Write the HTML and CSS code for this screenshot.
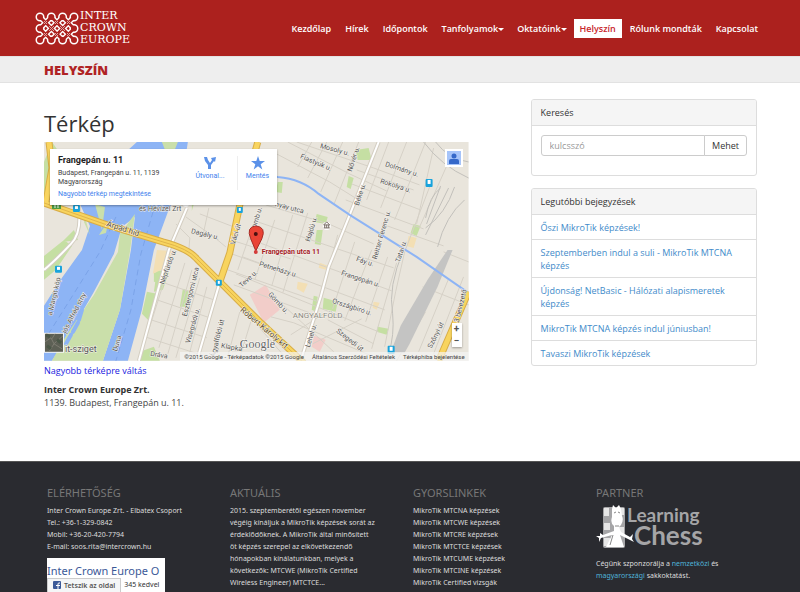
FILE: index.html
```html
<!DOCTYPE html>
<html lang="hu">
<head>
<meta charset="utf-8">
<title>Helyszín - Inter Crown Europe</title>
<link rel="stylesheet" href="styles.css">
</head>
<body>
<header class="topbar">
  <a class="brand" href="#" aria-label="Inter Crown Europe">
    <svg class="brand-mark" viewBox="0 0 44 33" width="44" height="33" aria-hidden="true">
      <defs>
        <path id="lattice" d="M5 5 L28 28 M16.300 5 L39 28 M27.600 5 L39 16.500 M5 16.500 L16.300 28 M16.300 5 L5 16.500 M27.600 5 L5 28 M39 5 L16.300 28 M39 16.500 L27.600 28"/>
        <path id="nodes" d="M5 5 h0 M16.300 5 h0 M27.600 5 h0 M39 5 h0 M5 16.500 h0 M39 16.500 h0 M5 28 h0 M16.300 28 h0 M27.600 28 h0 M39 28 h0" stroke-linecap="round"/>
      </defs>
      <g fill="none" stroke="#fff"><use href="#lattice" stroke-width="5.500"/><use href="#nodes" stroke-width="9"/></g>
      <g fill="none" stroke="#ac211e"><use href="#lattice" stroke-width="2.800"/><use href="#nodes" stroke-width="6"/></g>
      <path d="M14 14 L19 19 M19 14 L14 19 M25 14 L30 19 M30 14 L25 19 M9 9 L12 12 M12 9 L9 12 M20 9 L23 12 M23 9 L20 12 M32 9 L35 12 M35 9 L32 12 M9 21 L12 24 M12 21 L9 24 M20 21 L23 24 M23 21 L20 24 M32 21 L35 24 M35 21 L32 24" stroke="#fff" stroke-width="1" opacity=".6"/>
    </svg>
    <span class="brand-name">INTER<br>CROWN<br>EUROPE</span>
  </a>
  <nav class="menu">
    <a href="#">Kezdőlap</a>
    <a href="#">Hírek</a>
    <a href="#">Időpontok</a>
    <a href="#">Tanfolyamok<i class="caret"></i></a>
    <a href="#">Oktatóink<i class="caret"></i></a>
    <a class="active" href="#">Helyszín</a>
    <a href="#">Rólunk mondták</a>
    <a href="#">Kapcsolat</a>
  </nav>
</header>
<div class="titlebar"><strong>HELYSZÍN</strong></div>

<main class="page">
  <article>
    <h1>Térkép</h1>
    <div class="map">
      <svg class="map-art" viewBox="0 0 425 219" preserveAspectRatio="xMidYMid slice" role="img" aria-label="Térkép: Frangepán u. 11">
        <rect width="425" height="219" fill="#e9e5dc"/>
        <!-- river and island -->
        <path d="M93 0 H144 L138 40 L124 70 L110 108 L98 168 L84 219 H59 L76 168 L87 108 L91 75 L78 85 L70 112 L50 150 L28 188 L8 219 H0 V164 L18 136 L38 108 L46 84 L36 62 L60 30 Z" fill="#8db4f5"/>
        <path d="M91 72 L76 92 L74 110 L50 153 L22 194 L8 219 H59 L76 168 L86 110 Z" fill="#cadfaa"/>
        <path d="M118 0 H134 L126 20 Z M51 62 L58 88 L61 65 Z M41 75 L46 93 L40 80 Z M55 93 L65 78 L62 91 Z" fill="#cadfaa"/>
        <path d="M38 168 L35 178 M34 181 L29 190 M27 193 L22 202" stroke="#8db4f5" stroke-width="4" stroke-linecap="round"/>
        <g stroke="#7aa3e8" stroke-width="1" stroke-dasharray="6 4" fill="none"><path d="M112 60 L97 112 L87 168 L72 219 M72 75 L56 110 L26 158 L2 196"/></g>
        <!-- parks and districts -->
        <path d="M0 20 L8 0 L15 10 L5 60 H0 Z M0 114 L20 98 L28 104 L12 128 L0 138 Z M18 100 L30 88 L34 98 Z M110 150 L113 128 L125 131 L119 148 Z M98 172 L103 150 L113 152 L106 180 Z M136 165 L139 147 L145 149 L143 165 Z M110 131 L117 129 L116 141 L110 140 Z M312 8 L325 6 L328 18 L314 18 Z M305 34 L310 36 L307 47 L303 45 Z M234 40 L239 40 L238 51 L232 50 Z M273 72 L284 75 L282 82 L271 80 Z M273 88 L279 88 L277 103 L271 102 Z M270 154 L274 155 L272 170 L268 168 Z M280 156 L294 160 L292 170 L279 167 Z M334 185 L345 187 L343 193 L333 190 Z M370 82 L377 84 L373 94 L367 91 Z M148 58 L152 55 L148 69 Z M96 210 L110 205 L116 219 H95 Z" fill="#c5dfa3"/>
        <path d="M206 153 L222 143 L236 168 L220 181 Z M270 194 L282 198 L276 210 L268 205 Z" fill="#f2cdc9"/>
        <path d="M254 140 L264 142 L260 151 L253 147 Z M330 160 L336 161 L333 168 L329 166 Z M276 121 L284 124 L282 128 L275 126 Z M365 94 L373 96 L370 106 L363 104 Z M113 108 L129 109 L122 126 L109 132 Z" fill="#f3dfb4"/>
        <!-- minor streets -->
        <g fill="none" stroke="#d6d1c7" stroke-width="1">
          <path d="M128 115 L98 210 M141 121 L115 206 M148 128 L124 212 M156 136 L132 216 M163 145 L144 218 M120 141 L170 158 M113 158 L166 176 M107 178 L163 196 M101 195 L160 214"/>
          <path d="M142 75 L170 95 L182 105 M132 82 L146 96 L145 108 M156 72 L190 85 M165 66 L159 94 M190 99 L247 117 M188 112 L256 136 M184 128 L275 160 M190 143 L266 171 M212 75 L194 128 M231 78 L211 138 M249 73 L228 144 M264 71 L239 151 M222 63 L285 82 L330 102 M214 80 L350 126 M205 97 L348 149 M199 115 L341 168 M192 132 L335 190"/>
          <path d="M233 12 L286 40 L318 60 M244 0 L306 32 L343 49 M253 0 L330 26 L376 43 M268 0 L254 25 M283 0 L264 36 M299 0 L277 50 M315 0 L290 63 M345 0 L323 58 M363 0 L337 66 M382 0 L351 78 M313 28 L370 48 M308 42 L377 68 M302 58 L380 87 M338 82 L400 104 M390 6 L373 82 M404 22 L376 85 M386 45 L361 110 L352 150 L341 205"/>
          <path d="M294 93 L278 153 M311 100 L289 167 M328 108 L301 179 M344 115 L322 180 M353 121 L328 207 M238 162 L290 210 M227 175 L250 181 L330 215 M215 185 L241 215 M196 170 L183 218 M207 180 L195 219 M284 178 L330 202 M269 202 L318 177 M247 193 L280 172 M382 170 L353 219 M405 137 L375 210 M420 135 L390 212 M379 145 L425 163 M400 110 L425 120"/>
        </g>
        <g fill="none" stroke="#c2c0bb" stroke-width="1">
          <path d="M380 0 Q398 24 425 36 M392 0 Q405 17 425 20 M421 58 Q402 74 394 105 M397 44 L383 82 M405 46 L382 93 M411 45 Q402 72 382 86 M397 46 Q386 54 382 76"/>
          <path d="M360 108 Q344 145 349 172 Q351 193 345 212"/>
        </g>
        <path d="M404 108 L409 108 L394 145 L366 202 L361 211 H347 L357 184 L384 138 Z" fill="#c4c4c3"/>
        <!-- main streets -->
        <g fill="none" stroke="#d4cec2" stroke-width="4"><path d="M176 140 L153 219 M335 0 L306 73 L285 125 L277 155 L257 219 M34 60 Q39 90 27 102 Q11 119 0 128 M143 66 L125 108 L95 219"/></g>
        <g fill="none" stroke="#fff" stroke-width="2"><path d="M176 140 L153 219 M335 0 L306 73 L285 125 L277 155 L257 219 M34 60 Q39 90 27 102 Q11 119 0 128 M143 66 L125 108 L95 219"/></g>
        <path d="M206 31 L234 35 Q258 37 275 52 L306 73 L373 115 L425 151" fill="none" stroke="#8db4f5" stroke-width="2"/>
        <g fill="none" stroke="#d8ad47" stroke-width="7"><path d="M0 61 L63 83 L119 100 Q145 107 153 117 L176 140 L216 180 L260 221 M214 0 L196 63 L186 111 L176 140 M425 150 L395 219 M2 60 L8 26 L5 0"/></g>
        <g fill="none" stroke="#f8d45f" stroke-width="5"><path d="M0 61 L63 83 L119 100 Q145 107 153 117 L176 140 L216 180 L260 221 M214 0 L196 63 L186 111 L176 140 M425 150 L395 219 M2 60 L8 26 L5 0"/></g>
        <path d="M0 61 L63 83 L119 100 Q145 107 153 117 L176 140 L216 180 L260 221" fill="none" stroke="#dfb54c" stroke-width="1"/>
        <!-- stops -->
        <g fill="#19a3dc">
          <rect x="29" y="63" width="7" height="7" rx="1"/><rect x="11" y="124" width="7" height="7" rx="1"/><rect x="193" y="65" width="6" height="6" rx="1"/><rect x="172" y="138" width="6" height="6" rx="1"/><rect x="382" y="37" width="7" height="8" rx="1"/><rect x="344" y="204" width="7" height="8" rx="1"/>
        </g>
        <g fill="#fff"><rect x="31" y="64" width="3" height="3"/><rect x="13" y="125" width="3" height="3"/><rect x="195" y="66" width="2" height="3"/><rect x="174" y="139" width="2" height="3"/><rect x="384" y="38" width="3" height="4"/><rect x="346" y="205" width="3" height="4"/></g>
        <path d="M8 61 Q12 55 17 61 V67 H8 Z" fill="#4c9d43"/><path d="M11 61 V66 M14 61 V66" stroke="#fff"/>
        <circle cx="142" cy="62" r="3" fill="#fff"/><circle cx="142" cy="62" r="1" fill="#333"/>
        <circle cx="283" cy="84" r="4" fill="#fff"/><path d="M280 86 H286 M281 83 V86 M283 83 V86 M285 83 V86 M280 83 L283 80 L286 83 Z" stroke="#776b65" fill="none"/>
        <!-- street names -->
        <g class="street">
          <text x="95" y="69">és Hévízei Zrt</text>
          <text class="main-road" transform="translate(62 84) rotate(18)">Árpád híd</text>
          <text transform="translate(147 91) rotate(14)">Dagály u.</text>
          <text transform="translate(191 103) rotate(-73)">Váci út</text>
          <text transform="translate(211 91) rotate(-74)">Gomb u.</text>
          <text transform="translate(120 143) rotate(-70)">Népfürdő u.</text>
          <text transform="translate(143 175) rotate(-76)">Esztergomi utca</text>
          <text transform="translate(146 202) rotate(-74)">Visegrádi u.</text>
          <text transform="translate(171 216) rotate(-76)">Ágyalföldi út</text>
          <text transform="translate(198 146) rotate(-43)">Teve u.</text>
          <text transform="translate(177 206) rotate(10)">Klapka</text>
          <text transform="translate(106 214) rotate(9)">Dráva</text>
          <text transform="translate(73 210) rotate(-73)">Duna</text>
          <text transform="translate(22 192) rotate(-63)">jós Alfréd stny</text>
          <text transform="translate(8 174) rotate(-77)">a Margit köp</text>
          <text transform="translate(276 6) rotate(15)">Mosoly u.</text>
          <text transform="translate(256 16) rotate(23)">Fiastyúk u.</text>
          <text transform="translate(308 30) rotate(-72)">Nővér u.</text>
          <text transform="translate(341 24) rotate(18)">Dolmány u.</text>
          <text transform="translate(336 41) rotate(18)">Rokolya u.</text>
          <text transform="translate(315 64) rotate(-72)">Béke u.</text>
          <text transform="translate(231 64) rotate(15)">nyay utca</text>
          <text transform="translate(266 100) rotate(-73)">Hajdú u.</text>
          <text transform="translate(333 118) rotate(-74)">Reitter Ferenc u.</text>
          <text transform="translate(356 121) rotate(-72)">Tatai u.</text>
          <text transform="translate(215 124) rotate(17)">Petneházy u.</text>
          <text transform="translate(312 119) rotate(18)">Fáy u.</text>
          <text transform="translate(297 133) rotate(18)">Frangepán u.</text>
          <text transform="translate(224 153) rotate(47)">Gömb u.</text>
          <text transform="translate(288 161) rotate(18)">Országbíró u.</text>
          <text transform="translate(292 190) rotate(38)">Szegedi út</text>
          <text transform="translate(266 206) rotate(-73)">Lehel u.</text>
          <text transform="translate(388 207) rotate(-64)">Szőnyi út</text>
          <text transform="translate(415 181) rotate(-76)">3 bevezető</text>
          <text class="main-road" transform="translate(196 169) rotate(40)">Róbert Károly krt</text>
          <text class="area" x="249" y="176">ANGYALFÖLD</text>
          <text class="island" x="21" y="210">it-sziget</text>
          <text class="place" x="218" y="112">Frangepán utca 11</text>
        </g>
        <path d="M212 109 L207 97 Q202 85 212 84 Q223 85 218 97 Z" fill="#ea4335" stroke="#a62b24"/><circle cx="212" cy="92" r="2" fill="#4a1010"/><circle cx="212" cy="110" r="2" fill="#d43c3a"/>
        <text class="google" x="196" y="206">Google</text>
        <!-- satellite thumbnail -->
        <rect x="0" y="191" width="20" height="20" fill="#f5f5f5"/><rect x="1" y="192" width="18" height="18" fill="#5d6055"/><path d="M1 200 L7 196 L10 202 L19 194 M5 210 L10 202 L18 207 M11 192 L8 197" stroke="#7c7b70" stroke-width="1" fill="none"/><path d="M2 193 L6 195 M13 198 L17 201 M3 204 L7 207" stroke="#4a5747" stroke-width="3"/>
      </svg>
      <div class="map-card">
        <div class="map-place">
          <strong>Frangepán u. 11</strong>
          <span>Budapest, Frangepán u. 11, 1139 Magyarország</span>
          <a href="#">Nagyobb térkép megtekintése</a>
        </div>
        <button class="map-action" type="button">
          <svg viewBox="0 0 14 14" width="14" height="14"><path d="M1 1 H4 L5 4 L7 7 L9 4 L8 2 L13 1 L12 6 L11 5 L8 9 V13 H5 V9 L2 5 Z" fill="#5b91e8"/></svg>
          Útvonal...
        </button>
        <button class="map-action save" type="button">
          <svg viewBox="0 0 14 14" width="14" height="14"><path d="M7 0 L8.700 5 H14 L9.700 8.200 L11.300 13.500 L7 10.300 L2.700 13.500 L4.300 8.200 L0 5 H5.300 Z" fill="#5b91e8"/></svg>
          Mentés
        </button>
      </div>
      <button class="map-user" type="button" aria-label="Bejelentkezés">
        <svg viewBox="0 0 14 14" width="14" height="14"><rect width="14" height="14" fill="#a6c4f9"/><circle cx="7" cy="5" r="2.500" fill="#3568c9"/><path d="M2 13 V10 Q2 8 4 8 H10 Q12 8 12 10 V13 Z" fill="#3568c9"/></svg>
      </button>
      <div class="map-zoom"><button type="button">+</button><button type="button">−</button></div>
      <div class="map-legal"><span>©2015 Google - Térképadatok ©2015 Google</span><a href="#">Általános Szerződési Feltételek</a><a href="#">Térképhiba bejelentése</a></div>
    </div>
    <a class="larger" href="#">Nagyobb térképre váltás</a>
    <address><strong>Inter Crown Europe Zrt.</strong><br>1139. Budapest, Frangepán u. 11.</address>
  </article>

  <aside>
    <section class="panel">
      <h2><label for="q">Keresés</label></h2>
      <form class="search"><input id="q" type="text" placeholder="kulcsszó"><button type="button">Mehet</button></form>
    </section>
    <section class="panel">
      <h2>Legutóbbi bejegyzések</h2>
      <ul>
        <li><a href="#">Őszi MikroTik képzések!</a></li>
        <li><a href="#">Szeptemberben indul a suli - MikroTik MTCNA képzés</a></li>
        <li><a href="#">Újdonság! NetBasic - Hálózati alapismeretek képzés</a></li>
        <li><a href="#">MikroTik MTCNA képzés indul júniusban!</a></li>
        <li><a href="#">Tavaszi MikroTik képzések</a></li>
      </ul>
    </section>
  </aside>
</main>

<footer class="footer">
  <section>
    <h3>ELÉRHETŐSÉG</h3>
    <p>Inter Crown Europe Zrt. - Elbatex Csoport<br>Tel.: +36-1-329-0842<br>Mobil: +36-20-420-7794<br>E-mail: soos.rita@intercrown.hu</p>
    <div class="fb">
      <a class="fb-name" href="#">Inter Crown Europe O</a>
      <div class="fb-row">
        <button type="button"><svg viewBox="0 0 8 8" width="8" height="8"><rect width="8" height="8" rx="1" fill="#3b5998"/><path d="M7 2 H6 Q5 2 5 3 V8 M3 4.500 H7" stroke="#fff" fill="none"/></svg>Tetszik az oldal</button>
        <span>345 kedvel</span>
      </div>
    </div>
  </section>
  <section>
    <h3>AKTUÁLIS</h3>
    <p>2015. szeptemberétől egészen november végéig kínáljuk a MikroTik képzések sorát az érdeklődőknek. A MikroTik által minősített öt képzés szerepel az elkövetkezendő hónapokban kínálatunkban, melyek a következők: MTCWE (MikroTik Certified Wireless Engineer) MTCTCE...</p>
  </section>
  <section>
    <h3>GYORSLINKEK</h3>
    <ul>
      <li><a href="#">MikroTik MTCNA képzések</a></li>
      <li><a href="#">MikroTik MTCWE képzések</a></li>
      <li><a href="#">MikroTik MTCRE képzések</a></li>
      <li><a href="#">MikroTik MTCTCE képzések</a></li>
      <li><a href="#">MikroTik MTCUME képzések</a></li>
      <li><a href="#">MikroTik MTCINE képzések</a></li>
      <li><a href="#">MikroTik Certified vizsgák</a></li>
    </ul>
  </section>
  <section>
    <h3>PARTNER</h3>
    <svg class="chess" viewBox="0 0 108 44" width="108" height="44" role="img" aria-label="Learning Chess">
      <rect x="7" y="2" width="22" height="41" rx="2" fill="#a5a5a7"/>
      <path d="M8 3 H13 V11 H8 Z M22 3 H28 V10 H22 Z M8 18 H14 V25 H8 Z M22 22 H28 V29 H22 Z M8 33 H14 V41 H8 Z" fill="#e6e6e6"/>
      <path d="M16 4 L17 0 L20 3 L23 0 L25 4 L26 11 Q28 15 25 20 L23 22 L25 27 L34 32 L37 29 L36 34 L38 37 L34 35 L24 30 L28 42 H10 L16 30 L5 33 L3 37 L3 33 L0 31 L4 31 L4 28 L7 30 L18 26 L18 21 Q14 18 16 12 Z" fill="#fff"/>
      <path d="M18 8 L20 7 M22 7 L24 8 M19 21 H23 M17 30 L14 40" stroke="#888" fill="none"/>
      <text x="31" y="17">Learning</text><text class="big" x="38" y="40">Chess</text>
    </svg>
    <p>Cégünk szponzorálja a <a class="cyan" href="#">nemzetközi</a> és <a class="cyan" href="#">magyarországi</a> sakkoktatást.</p>
  </section>
</footer>
</body>
</html>
```
FILE: styles.css
```css
* { box-sizing: border-box; }
body { margin: 0; min-height: 100vh; display: flex; flex-direction: column; background: #fff; color: #444; font: 9px/13px "Open Sans", "Noto Sans", sans-serif; }
a { text-decoration: none; color: inherit; }
button, input { font: inherit; color: inherit; margin: 0; }
h1, h2, h3, p, ul { margin: 0; padding: 0; font-weight: 400; }
ul { list-style: none; }

.topbar { display: flex; align-items: center; justify-content: space-between; height: 56px; padding: 0 36px 0 35px; background: #ac211e; color: #fff; }
.brand { display: flex; align-items: center; gap: 1px; }
.brand-name { font: 11px/12px "DejaVu Serif", serif; }
.brand-mark { display: block; }
.menu { display: flex; gap: 2px; font-weight: 600; }
.menu a { padding: 3px 6px; white-space: nowrap; }
.menu .active { background: #fff; color: #c8262c; }
.caret { display: inline-block; vertical-align: 1px; border: 3px solid transparent; border-top-color: currentColor; border-bottom: 0; margin-right: -1px; }
.titlebar { padding: 6px 44px 5px; border: 1px solid #e2e2e2; border-width: 1px 0; background: #eee; color: #b02324; font-size: 13px; line-height: 14px; }
.titlebar strong { font-weight: 800; }

.page { display: grid; grid-template-columns: 15fr 8fr; gap: 62px; padding: 16px 43px 52px 44px; align-items: start; }
h1 { margin: 10px 0 5px; font-size: 22px; line-height: 28px; color: #333; }
.map { position: relative; overflow: hidden; font-family: Roboto, sans-serif; }
.map-art { display: block; width: 100%; height: auto; }
.street { font: 7px Roboto, sans-serif; fill: #555; stroke: #f5f3ee; stroke-width: 1px; paint-order: stroke; }
.street .main-road { font-size: 8px; fill: #624f2a; }
.street .area { font-size: 8px; fill: #8b8980; }
.street .island { font-size: 9px; }
.street .place { font-weight: 700; fill: #a5201f; }
.google { font: 12px "Liberation Serif", serif; fill: #666; stroke: #fff; stroke-width: 1px; paint-order: stroke; }
.map-card { position: absolute; top: 7px; left: 6px; display: flex; width: 227px; height: 56px; padding: 7px 0 0 8px; background: #fff; box-shadow: 0 1px 2px #0005; }
.map-place { flex: 1; display: flex; flex-direction: column; font-size: 7px; line-height: 9px; }
.map-place strong { font-size: 9px; color: #222; margin-bottom: 4px; }
.map-place span { width: 120px; }
.map-place a { margin-top: 3px; color: #427fed; }
.map-action { display: flex; flex-direction: column; align-items: center; gap: 2px; width: 54px; height: 34px; padding: 0; border: 0; background: none; font-size: 7px; line-height: 9px; color: #427fed; }
.map-action.save { width: 40px; border-left: 1px solid #eee; }
.map-user { position: absolute; top: 7px; right: 6px; padding: 2px; border: 0; background: #fff; }
.map-user svg { display: block; }
.map-zoom { position: absolute; right: 7px; bottom: 14px; display: flex; flex-direction: column; background: #fff; box-shadow: 0 1px 2px #0005; }
.map-zoom button { width: 10px; height: 12px; padding: 0; border: 0; background: none; font: 700 10px/12px Roboto, sans-serif; color: #555; }
.map-legal { position: absolute; right: 0; bottom: 0; display: flex; gap: 8px; padding: 0 4px; background: #f5f5f5b0; font-size: 6px; line-height: 9px; white-space: nowrap; color: #444; }
.larger { display: block; margin: 3px 0 6px; color: #1a1ae0; }
address { font-style: normal; }
address strong { color: #333; }

.panel { margin-bottom: 12px; border: 1px solid #ddd; border-radius: 3px; }
.panel h2 { padding: 6px 9px; border-bottom: 1px solid #ddd; background: #f5f5f5; border-radius: 2px 2px 0 0; font-size: 9px; line-height: 13px; color: #333; }
.search { display: flex; padding: 9px 9px 19px; }
.search input { flex: 1; min-width: 0; height: 21px; padding: 0 8px; border: 1px solid #ccc; border-radius: 3px 0 0 3px; }
.search input::placeholder { color: #999; }
.search button { margin-left: -1px; padding: 0 7px; border: 1px solid #ccc; border-radius: 0 3px 3px 0; background: #fff; color: #333; }
.panel li { padding: 6px 9px 5px; color: #428bca; }
.panel li + li { border-top: 1px solid #ddd; }

.footer { flex: 1; display: grid; grid-template-columns: repeat(4, minmax(0, 1fr)); gap: 37px; padding: 24px 58px 0 47px; border-top: 1px solid #555; background: #2a2b30; color: #ddd; font: 7px/12px "Noto Sans", "Open Sans", sans-serif; }
.footer h3 { margin-bottom: 5px; font-size: 11px; line-height: 14px; color: #777; }
.fb { width: 118px; height: 34px; margin-top: 5px; padding-top: 5px; overflow: hidden; background: #fff; white-space: nowrap; }
.fb-name { display: block; font-size: 11px; line-height: 15px; color: #3b5998; }
.fb-row { display: flex; align-items: center; gap: 3px; color: #333; }
.fb-row button { display: flex; align-items: center; gap: 3px; padding: 0 5px; border: 1px solid #ccc; background: #f5f6f7; font-weight: 600; line-height: 13px; color: #555; }
.chess { display: block; margin-bottom: 9px; }
.chess text { font: 700 19px Lato, sans-serif; fill: #a5a5a7; }
.chess .big { font-size: 26px; }
.cyan { color: #4fb3d9; }
```
